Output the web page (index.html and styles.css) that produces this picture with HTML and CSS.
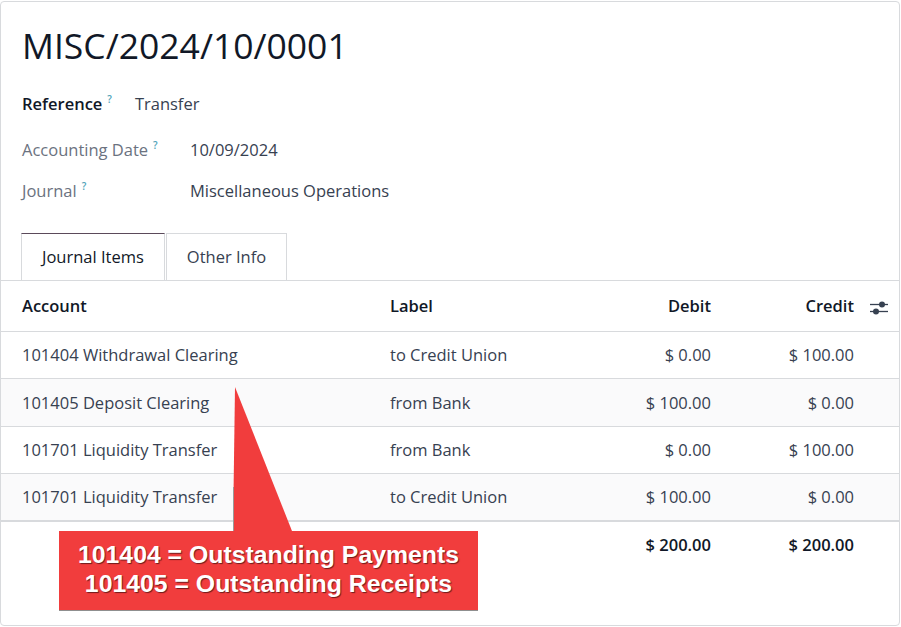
FILE: index.html
```html
<!DOCTYPE html>
<html lang="en">
<head>
    <meta charset="UTF-8">
    <title>MISC/2024/10/0001</title>
    <link rel="stylesheet" href="styles.css">
</head>
<body>
    <div class="sheet">
        <div class="head">
            <h1 class="title">MISC/2024/10/0001</h1>

            <div class="ref-row">
                <span class="ref-label">Reference<sup class="tip">?</sup></span>
                <span class="value">Transfer</span>
            </div>

            <div class="fields">
                <span class="label">Accounting Date<sup class="tip">?</sup></span>
                <span class="value">10/09/2024</span>
                <span class="label">Journal<sup class="tip">?</sup></span>
                <span class="value">Miscellaneous Operations</span>
            </div>

            <ul class="tabs">
                <li class="tab active">Journal Items</li>
                <li class="tab">Other Info</li>
            </ul>
        </div>

        <table class="lines">
            <colgroup>
                <col class="c-account">
                <col class="c-label">
                <col class="c-debit">
                <col class="c-credit">
                <col class="c-opt">
            </colgroup>
            <thead>
                <tr>
                    <th class="first">Account</th>
                    <th>Label</th>
                    <th class="num">Debit</th>
                    <th class="num credit">Credit</th>
                    <th class="opt">
                        <svg width="18" height="14" viewBox="0 0 18 14">
                            <line x1="0" y1="3.5" x2="18" y2="3.5" stroke="#374151" stroke-width="1.3"/>
                            <circle cx="12" cy="3.5" r="3" fill="#374151"/>
                            <line x1="0" y1="10.5" x2="18" y2="10.5" stroke="#374151" stroke-width="1.3"/>
                            <circle cx="6" cy="10.5" r="3" fill="#374151"/>
                        </svg>
                    </th>
                </tr>
            </thead>
            <tbody>
                <tr>
                    <td class="first">101404 Withdrawal Clearing</td>
                    <td>to Credit Union</td>
                    <td class="num">$ 0.00</td>
                    <td class="num credit">$ 100.00</td>
                    <td></td>
                </tr>
                <tr>
                    <td class="first">101405 Deposit Clearing</td>
                    <td>from Bank</td>
                    <td class="num">$ 100.00</td>
                    <td class="num credit">$ 0.00</td>
                    <td></td>
                </tr>
                <tr>
                    <td class="first">101701 Liquidity Transfer</td>
                    <td>from Bank</td>
                    <td class="num">$ 0.00</td>
                    <td class="num credit">$ 100.00</td>
                    <td></td>
                </tr>
                <tr>
                    <td class="first">101701 Liquidity Transfer</td>
                    <td>to Credit Union</td>
                    <td class="num">$ 100.00</td>
                    <td class="num credit">$ 0.00</td>
                    <td></td>
                </tr>
            </tbody>
            <tfoot>
                <tr>
                    <td class="first"></td>
                    <td></td>
                    <td class="num">$ 200.00</td>
                    <td class="num credit">$ 200.00</td>
                    <td></td>
                </tr>
            </tfoot>
        </table>

        <!-- annotation pointing at the first account -->
        <svg class="pointer" width="70" height="150" viewBox="0 0 70 150">
            <polygon points="12,0 10,144 69,144" fill="#f13d3d"/>
            <line x1="10.5" y1="100" x2="10.5" y2="144" stroke="#9a9a9a" stroke-width="1"/>
        </svg>
        <div class="callout">
            101404 = Outstanding Payments<br>
            101405 = Outstanding Receipts
        </div>
    </div>
</body>
</html>
```

FILE: styles.css
```css
body {
    margin: 0;
    padding: 1px 1px 1px 0;
    font-family: 'Open Sans', 'Noto Sans', sans-serif;
    font-size: 16.5px;
    color: #374151;
    background: white;
}
.sheet {
    position: relative;
    height: 625px;
    border: 1px solid #d8dadd;
    border-radius: 4px;
    box-sizing: border-box;
    overflow: hidden;
}
.head {
    padding: 0 0 0 20px;
}
.title, .ref-row, .fields {
    margin-left: 1px;
}
.title {
    margin-top: 0;
    margin-bottom: 0;
    padding-top: 21px;
    font-size: 35.5px;
    font-weight: 500;
    line-height: 44px;
    color: #111827;
}
.ref-row {
    display: flex;
    gap: 23px;
    margin-top: 26px;
    line-height: 22px;
    height: 22px;
}
.ref-label {
    color: #111827;
    font-weight: 600;
}
.tip {
    position: relative;
    top: -7px;
    vertical-align: baseline;
    line-height: 0;
    color: #4fa3b8;
    font-size: 10px;
    font-weight: 600;
    margin-left: 5px;
}
.fields {
    display: grid;
    grid-template-columns: 168px auto;
    grid-auto-rows: 22px;
    row-gap: 19px;
    margin-top: 24px;
    line-height: 22px;
}
.fields .label {
    color: #6b7280;
}
.fields .value {
    color: #374151;
}
.tabs {
    display: flex;
    list-style: none;
    margin: 31px 0 0 0;
    padding: 0;
}
.tab {
    padding: 12px 20px 12px 20px;
    line-height: 22px;
    height: 22px;
    border: 1px solid #d8dadd;
    border-bottom: none;
    margin-right: 1px;
    color: #374151;
}
.tab.active {
    border-top: 1px solid #5b4a5a;
    color: #111827;
}
.lines {
    width: 100%;
    border-collapse: collapse;
    table-layout: fixed;
}
.c-account { width: 369px; }
.c-label { width: 221px; }
.c-debit { width: 140px; }
.c-credit { width: 133px; }
.c-opt { width: auto; }
.lines th, .lines td {
    padding: 0 0 0 20px;
    text-align: left;
    white-space: nowrap;
    line-height: 22px;
}
.lines th {
    height: 51px;
    box-sizing: border-box;
    color: #111827;
    font-weight: 600;
    border-top: 1px solid #d8dadd;
    border-bottom: 1px solid #d8dadd;
}
.lines td {
    height: 47px;
    box-sizing: border-box;
    border-bottom: 1px solid #d8dadd;
}
.lines tbody tr:nth-child(2) td {
    height: 48px;
}
.lines .first {
    padding-left: 21px;
}
.lines .num {
    text-align: right;
    padding: 0 20px 0 0;
}
.lines .num.credit {
    padding-right: 10px;
}
.lines th.opt {
    padding: 4px 0 0 6px;
    line-height: 0;
}
.lines tbody tr:nth-child(even) td {
    background: #fafafb;
}
.lines tbody tr:last-child td {
    border-bottom: 2px solid #d8dadd;
}
.lines tfoot td {
    border-bottom: none;
    height: 48px;
    color: #111827;
    font-weight: 600;
}
.pointer {
    position: absolute;
    left: 222px;
    top: 385px;
}
.callout {
    position: absolute;
    left: 58px;
    top: 529px;
    width: 419px;
    height: 80px;
    box-sizing: border-box;
    padding-top: 9px;
    background: #f13d3d;
    border-bottom: 1px solid #8f8f8f;
    color: white;
    font-family: 'Liberation Sans', Arial, sans-serif;
    font-size: 24.8px;
    font-weight: bold;
    line-height: 29px;
    text-align: center;
    text-shadow: 1px 1px 1px rgba(0, 0, 0, 0.55);
}
```
